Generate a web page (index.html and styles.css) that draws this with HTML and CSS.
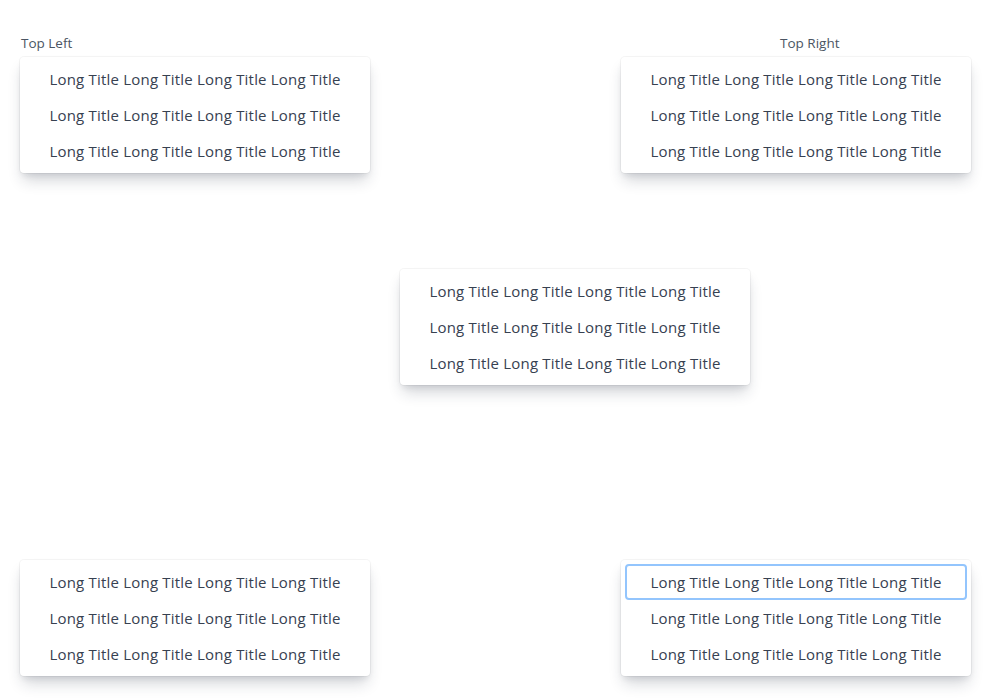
FILE: index.html
```html
<!DOCTYPE html>
<html>
<head>
<meta charset="utf-8">
<link rel="stylesheet" href="styles.css">
</head>
<body>
<div class="page">
  <div class="row top">
    <div class="block">
      <div class="label">Top Left</div>
      <div class="menu">
        <div class="item">Long Title Long Title Long Title Long Title</div>
        <div class="item">Long Title Long Title Long Title Long Title</div>
        <div class="item">Long Title Long Title Long Title Long Title</div>
      </div>
    </div>
    <div class="block">
      <div class="label label-right">Top Right</div>
      <div class="menu">
        <div class="item">Long Title Long Title Long Title Long Title</div>
        <div class="item">Long Title Long Title Long Title Long Title</div>
        <div class="item">Long Title Long Title Long Title Long Title</div>
      </div>
    </div>
  </div>
  <div class="row middle">
    <div class="menu">
      <div class="item">Long Title Long Title Long Title Long Title</div>
      <div class="item">Long Title Long Title Long Title Long Title</div>
      <div class="item">Long Title Long Title Long Title Long Title</div>
    </div>
  </div>
  <div class="row bottom">
    <div class="menu">
      <div class="item">Long Title Long Title Long Title Long Title</div>
      <div class="item">Long Title Long Title Long Title Long Title</div>
      <div class="item">Long Title Long Title Long Title Long Title</div>
    </div>
    <div class="menu">
      <div class="item item-focus">Long Title Long Title Long Title Long Title</div>
      <div class="item">Long Title Long Title Long Title Long Title</div>
      <div class="item">Long Title Long Title Long Title Long Title</div>
    </div>
  </div>
</div>
</body>
</html>
```
FILE: styles.css
```css
html, body {
  margin: 0;
  padding: 0;
  background: #ffffff;
}
body {
  font-family: "Open Sans", "Noto Sans", sans-serif;
  color: #374151;
}
.page {
  width: 991px;
  height: 700px;
  padding: 33px 20px 0 20px;
  box-sizing: border-box;
  display: flex;
  flex-direction: column;
}
.row {
  display: flex;
  justify-content: space-between;
  align-items: flex-start;
}
.label {
  font-size: 13.5px;
  line-height: 20px;
  font-weight: 500;
  color: #4b5563;
  padding-left: 1px;
  margin-bottom: 4px;
}
.label-right {
  padding-left: 159px;
}
.menu {
  width: 350px;
  padding: 4px;
  box-sizing: border-box;
  background: #fff;
  border-radius: 4px;
  box-shadow: 0 0 0 1px rgba(0,0,0,0.04), 0 10px 15px -3px rgba(30,41,59,0.2), 0 4px 6px -2px rgba(30,41,59,0.1);
}
.item {
  height: 36px;
  line-height: 37px;
  font-size: 15px;
  letter-spacing: 0.2px;
  text-align: center;
  white-space: nowrap;
  color: #374151;
  border-radius: 4px;
  box-sizing: border-box;
}
.item-focus {
  border: 2px solid #93c5fd;
  line-height: 33px;
}
.middle {
  margin-top: 96px;
  padding-left: 380px;
}
.bottom {
  margin-top: auto;
  margin-bottom: 24px;
}
```
